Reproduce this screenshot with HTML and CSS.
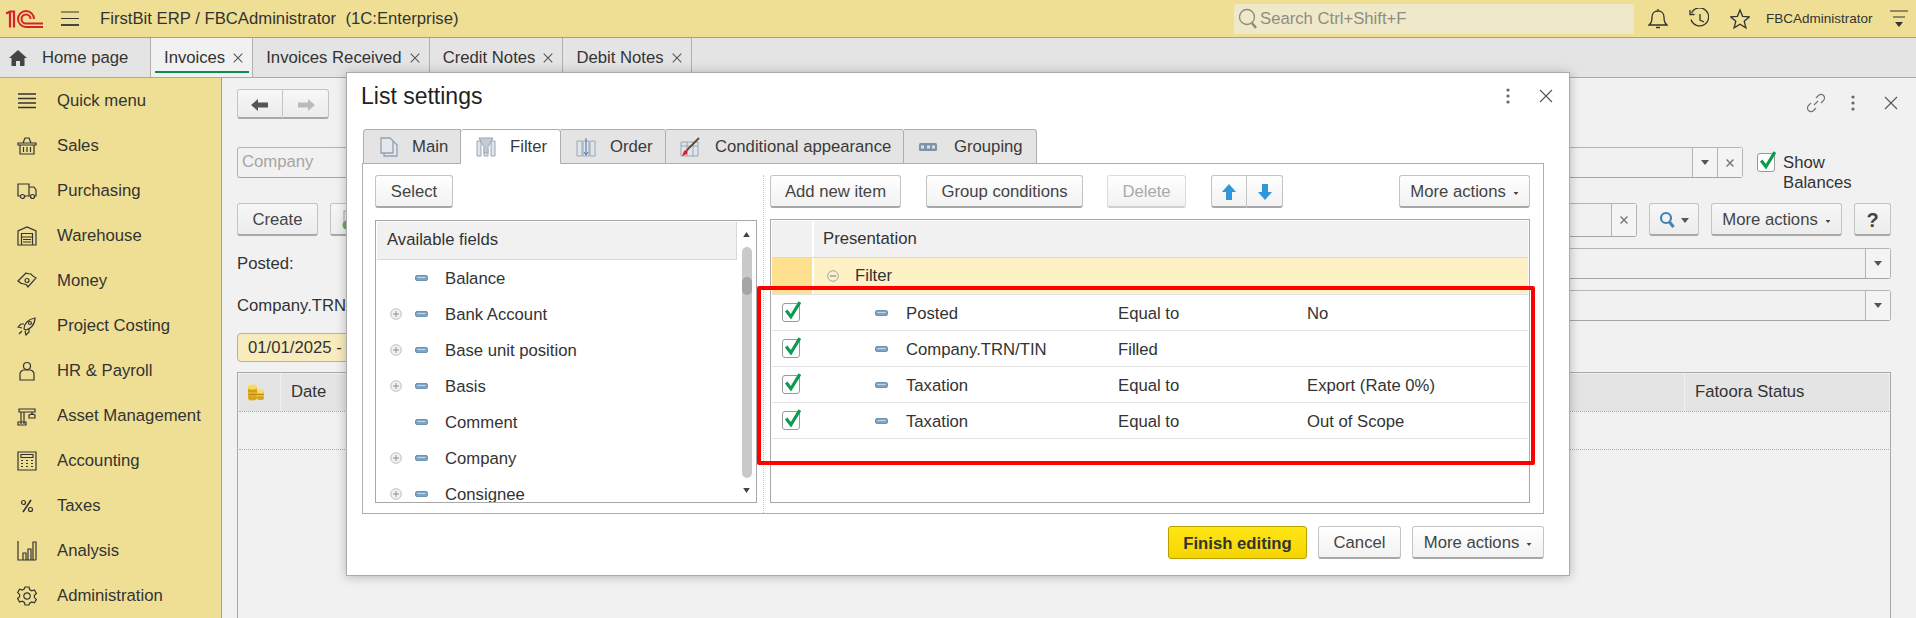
FILE: index.html
```html
<!DOCTYPE html>
<html lang="en">
<head>
    <meta charset="UTF-8">
    <meta name="viewport" content="width=device-width, initial-scale=1.0">
    <title>List settings</title>
    <link rel="stylesheet" href="styles.css">
</head>
<body>
    <svg class="sprites" width="0" height="0">
        <symbol id="i-basket" viewBox="0 0 20 20"><path d="M6 7l2-5h4l2 5M1 7h18v2H1zM3 9v9h14V9M6.500 11v5M10 11v5M13.500 11v5"/></symbol>
        <symbol id="i-truck" viewBox="0 0 20 20"><path d="M4 15H1V3h11v12H7M12 6h5l2 3v6h-2M12 15h2"/><circle cx="5.500" cy="15.500" r="2"/><circle cx="15.500" cy="15.500" r="2"/></symbol>
        <symbol id="i-store" viewBox="0 0 20 20"><path d="M1 19V5l9-4 9 4v14zM4.500 19V7.500h11V19M4.500 11h11M6 13.500h8M6 16h8"/></symbol>
        <symbol id="i-money" viewBox="0 0 20 20"><path d="M1 10l8-8c2 1 4 1 5 1 1 2 3 3 5 4l-8 9c-1-2-3-3-4-3-2 0-4-1-6-3z"/><circle cx="10" cy="9.500" r="2"/></symbol>
        <symbol id="i-rocket" viewBox="0 0 20 20"><path d="M7 13c0-5 4-10 11-11 0 7-5 11-9 12zM7 8H4l-3 3 4 1M12 13v3l-3 3-1-4M5 15l-3 3"/><circle cx="13" cy="7" r="1.500"/></symbol>
        <symbol id="i-person" viewBox="0 0 20 20"><circle cx="10" cy="5" r="3.500"/><path d="M3 19v-6c0-2 2-4 4-4h6c2 0 4 2 4 4v6z"/></symbol>
        <symbol id="i-crane" viewBox="0 0 20 20"><path d="M2 3h16v3H2zM4 6v12M7 6v12M1 16h8v3H1zM15 6v3M12 9l3-1 3 1v3h-6z"/></symbol>
        <symbol id="i-calc" viewBox="0 0 20 20"><path d="M1 1h18v18H1zM4 3.500h12v3H4zM4 9.500h2M9 9.500h2M14 9.500h2M4 12.500h2M9 12.500h2M14 12.500h2M4 15.500h2M9 15.500h2M14 15.500h2"/></symbol>
        <symbol id="i-percent" viewBox="0 0 20 20"><circle cx="6.500" cy="6.500" r="2"/><circle cx="13.500" cy="13.500" r="2"/><path d="M14 4L6 16" stroke-width="1.600"/></symbol>
        <symbol id="i-chart" viewBox="0 0 20 20"><path d="M1 0v19h18M6 19v-7h3v7M11 19V8h3v11M16 19V1h3v18"/></symbol>
        <symbol id="i-gear" viewBox="0 0 20 20"><path d="M8 1h4l.6 2.600 2.200 1.200 2.600-.8 2 3.400-2 1.800v2.400l2 1.800-2 3.400-2.600-.8-2.200 1.200L12 19H8l-.6-2.600-2.200-1.200-2.600.8-2-3.400 2-1.800V8.400l-2-1.800 2-3.400 2.600.8 2.200-1.200z"/><circle cx="10" cy="10" r="3.200"/></symbol>
        <symbol id="i-field" viewBox="0 0 13 6"><rect x=".5" y=".5" width="12" height="5" rx="1.500" fill="#7fa5c6" stroke="#6f93b3"/><path d="M2.500 2.500h8" stroke="#c5d8e8"/></symbol>
        <symbol id="i-plus" viewBox="0 0 12 12"><circle cx="6" cy="6" r="5.300" fill="#f2f2f2" stroke="#bdbdbd"/><path d="M3 6h6M6 3v6" stroke="#8f8f8f"/></symbol>
        <symbol id="i-minus" viewBox="0 0 12 12"><circle cx="6" cy="6" r="5.300" fill="#f7f0d2" stroke="#a9a69a"/><path d="M3 6h6" stroke="#777"/></symbol>
        <symbol id="i-check" viewBox="0 0 20 20"><path d="M4 10l4.500 6L17 2" fill="none" stroke="#0b9a4f" stroke-width="3"/></symbol>
        <symbol id="i-down" viewBox="0 0 8 5"><path d="M0 0h8L4 5z"/></symbol>
        <symbol id="i-x" viewBox="0 0 14 14"><path d="M1 1l12 12M13 1L1 13" fill="none"/></symbol>
        <symbol id="i-dots" viewBox="0 0 4 16"><circle cx="2" cy="2" r="1.600"/><circle cx="2" cy="8" r="1.600"/><circle cx="2" cy="14" r="1.600"/></symbol>
        <symbol id="i-search" viewBox="0 0 16 18"><circle cx="7" cy="7" r="5" fill="none" stroke="#3f84b5" stroke-width="2.200"/><path d="M10.500 11l4 5" stroke="#3f84b5" stroke-width="3"/></symbol>
    </svg>

    <header class="topbar">
        <svg class="logo" viewBox="0 0 38 18" fill="none" stroke="#d5232b" stroke-width="2">
            <path d="M0 3.500L4 1.500H8V17.500M4 1.500V17.500" stroke-width="2.200"/>
            <path d="M28 9A8 8 0 1 0 20 17H37"/>
            <path d="M24.500 9A4.500 4.500 0 1 0 20 13.500H37"/>
        </svg>
        <svg class="burger" viewBox="0 0 18 15" stroke="#333"><path d="M0 1h18M0 7.500h18" stroke-width="1.200"/><path d="M0 14h18" stroke-width="1.800"/></svg>
        <span class="app-title">FirstBit ERP / FBCAdministrator&nbsp; (1C:Enterprise)</span>
        <div class="search-box">
            <svg class="search-ico" viewBox="0 0 20 22" fill="none" stroke="#8a8a80"><circle cx="9" cy="9" r="7.500" stroke-width="1.300"/><path d="M14 15l4 5" stroke-width="2.500"/></svg>
            <span>Search Ctrl+Shift+F</span>
        </div>
        <svg class="top-ico" viewBox="0 0 20 22" fill="none" stroke="#333" stroke-width="1.300"><path d="M1 17c2-2 3-3 3-8 0-4 3-6 6-6s6 2 6 6c0 5 1 6 3 8zM10 1v2M8 19.500h4"/></svg>
        <svg class="top-ico" viewBox="0 0 20 22" fill="none" stroke="#333" stroke-width="1.300"><path d="M2.500 5A9 9 0 1 1 2 11.500M1 2v4.500h4.500M11 6v6l4 2"/></svg>
        <svg class="top-ico" viewBox="0 0 20 22" fill="none" stroke="#333" stroke-width="1.300"><path d="M10 2l2.600 6.300 6.800.5-5.200 4.400 1.700 6.600L10 16.200l-5.900 3.600 1.700-6.600L.6 8.800l6.800-.5z"/></svg>
        <span class="user-name">FBCAdministrator</span>
        <svg class="user-menu" viewBox="0 0 18 18" stroke="#333"><path d="M0 1h18M3 7h12"/><path d="M5 12h8l-4 5z" fill="#333" stroke="none"/></svg>
    </header>

    <nav class="tabs">
        <div class="tab tab-home">
            <svg class="home-ico" viewBox="0 0 18 16"><path d="M9 0l9 8h-2.500v8H11v-5H7v5H2.500V8H0z" fill="#444"/></svg>
            Home page
        </div>
        <div class="tab tab-active">Invoices <svg class="tab-x"><use href="#i-x"/></svg></div>
        <div class="tab">Invoices Received <svg class="tab-x"><use href="#i-x"/></svg></div>
        <div class="tab">Credit Notes <svg class="tab-x"><use href="#i-x"/></svg></div>
        <div class="tab">Debit Notes <svg class="tab-x"><use href="#i-x"/></svg></div>
    </nav>

    <div class="workspace">
        <aside class="side">
            <div class="side-item"><svg class="side-ico" viewBox="0 0 20 20"><path d="M1 3h18M1 7.500h18M1 12h18M1 16.500h18" stroke-width="1.600"/></svg>Quick menu</div>
            <div class="side-item"><svg class="side-ico"><use href="#i-basket"/></svg>Sales</div>
            <div class="side-item"><svg class="side-ico"><use href="#i-truck"/></svg>Purchasing</div>
            <div class="side-item"><svg class="side-ico"><use href="#i-store"/></svg>Warehouse</div>
            <div class="side-item"><svg class="side-ico"><use href="#i-money"/></svg>Money</div>
            <div class="side-item"><svg class="side-ico"><use href="#i-rocket"/></svg>Project Costing</div>
            <div class="side-item"><svg class="side-ico"><use href="#i-person"/></svg>HR &amp; Payroll</div>
            <div class="side-item"><svg class="side-ico"><use href="#i-crane"/></svg>Asset Management</div>
            <div class="side-item"><svg class="side-ico"><use href="#i-calc"/></svg>Accounting</div>
            <div class="side-item"><svg class="side-ico"><use href="#i-percent"/></svg>Taxes</div>
            <div class="side-item"><svg class="side-ico"><use href="#i-chart"/></svg>Analysis</div>
            <div class="side-item"><svg class="side-ico"><use href="#i-gear"/></svg>Administration</div>
        </aside>

        <main class="main">
            <div class="row-nav">
                <div class="btn-group">
                    <button class="btn btn-arrow"><svg viewBox="0 0 18 12" width="18" height="12"><path d="M0 6l7-6v3.500h10v5H7V12z" fill="#555"/></svg></button>
                    <button class="btn btn-arrow"><svg viewBox="0 0 18 12" width="18" height="12"><path d="M18 6l-7-6v3.500H1v5h10V12z" fill="#bbb"/></svg></button>
                </div>
                <div class="form-actions">
                    <svg class="link-ico" viewBox="0 0 20 20" fill="none" stroke="#777" stroke-width="1.200"><path d="M8 12l4-4M10 5l2.500-2.500a3.500 3.500 0 0 1 5 5L15 10M10 15l-2.500 2.500a3.500 3.500 0 0 1-5-5L5 10"/></svg>
                    <svg class="dots-ico"><use href="#i-dots"/></svg>
                    <svg class="close-ico"><use href="#i-x"/></svg>
                </div>
            </div>

            <div class="row-company">
                <div class="field field-grow">
                    <span class="placeholder">Company</span>
                    <span class="field-btn"><svg class="caret"><use href="#i-down"/></svg></span>
                    <span class="field-btn"><svg class="mini-x"><use href="#i-x"/></svg></span>
                </div>
                <div class="balance-check">
                    <span class="check-box"><svg><use href="#i-check"/></svg></span>
                    <span>Show<br>Balances</span>
                </div>
            </div>

            <div class="row-commands">
                <button class="btn btn-create">Create</button>
                <button class="btn btn-post"><svg viewBox="0 0 16 20" width="16" height="20"><rect x="2" y="1" width="11" height="15" fill="#eee" stroke="#aaa"/><circle cx="5" cy="15" r="4.500" fill="#63b34f"/></svg></button>
                <div class="field field-grow field-tall">
                    <span class="field-btn"><svg class="mini-x"><use href="#i-x"/></svg></span>
                </div>
                <button class="btn btn-find"><svg viewBox="0 0 16 18" width="16" height="18"><use href="#i-search"/></svg><svg class="caret"><use href="#i-down"/></svg></button>
                <button class="btn btn-more">More actions<svg class="caret-sm"><use href="#i-down"/></svg></button>
                <button class="btn btn-help">?</button>
            </div>

            <div class="row-filter">
                <label class="filter-label">Posted:</label>
                <div class="field field-grow"><span class="field-btn"><svg class="caret"><use href="#i-down"/></svg></span></div>
            </div>
            <div class="row-filter">
                <label class="filter-label">Company.TRN/TIN:</label>
                <div class="field field-grow"><span class="field-btn"><svg class="caret"><use href="#i-down"/></svg></span></div>
            </div>

            <div class="date-chip">01/01/2025 - 31/12/2025</div>

            <div class="doc-table">
                <div class="doc-head">
                    <div class="doc-th doc-coin">
                        <svg viewBox="0 0 18 18" width="18" height="18">
                            <path d="M1 4h9v11H1z" fill="#e4b22a"/><ellipse cx="5.500" cy="4" rx="4.500" ry="2.500" fill="#f7da5c"/><ellipse cx="5.500" cy="15" rx="4.500" ry="2.500" fill="#d9a51d"/>
                            <path d="M1 8h9M1 11.500h9" stroke="#b98a14"/>
                            <path d="M10 8h7v7h-7z" fill="#eec23a"/><ellipse cx="13.500" cy="8" rx="3.500" ry="2" fill="#f9e06a"/><ellipse cx="13.500" cy="15" rx="3.500" ry="2" fill="#d9a51d"/>
                            <path d="M10 11.500h7" stroke="#b98a14"/>
                        </svg>
                    </div>
                    <div class="doc-th doc-date">Date</div>
                    <div class="doc-th doc-status">Fatoora Status</div>
                </div>
                <div class="doc-empty"></div>
            </div>
        </main>
    </div>

    <section class="modal">
        <div class="modal-head">
            <h1>List settings</h1>
            <svg class="dots-ico"><use href="#i-dots"/></svg>
            <svg class="close-ico"><use href="#i-x"/></svg>
        </div>

        <div class="sheet-tabs">
            <div class="sheet-tab tab-main">
                <svg class="sheet-ico" viewBox="0 0 20 20" fill="#e4e8ee" stroke="#93a0ad" stroke-width="1.300"><path d="M5 4h9l4 4v11H5z"/><path d="M2 1h9l3 3v12H2z"/></svg>Main
            </div>
            <div class="sheet-tab sheet-tab-on tab-filter">
                <svg class="sheet-ico" viewBox="0 0 20 20" fill="#dfe5ea" stroke="#9aa7b2"><path d="M1 4h4v15H1zM15 4h4v15h-4zM8 12h4v7H8z"/><path d="M3 1h14l-5 9v6H8v-6z" fill="#c3ccd4"/></svg>Filter
            </div>
            <div class="sheet-tab tab-order">
                <svg class="sheet-ico" viewBox="0 0 20 20" fill="#dfe5ea" stroke="#9aa7b2"><path d="M1 4h5v15H1zM14 4h5v15h-5zM7 4h6v15H7z"/><path d="M10 1v17M8 15l2 3 2-3" fill="none" stroke="#3f74a8"/></svg>Order
            </div>
            <div class="sheet-tab tab-cond">
                <svg class="sheet-ico" viewBox="0 0 20 20" fill="#dfe5ea" stroke="#9aa7b2"><path d="M1 5h17v14H1zM1 9h17M7 5v14M13 5v14"/><path d="M19 1L7 13" stroke="#6b4a32" stroke-width="2"/><path d="M8 12l-4 2-2 5 5-2z" fill="#d5232b" stroke="none"/></svg>Conditional appearance
            </div>
            <div class="sheet-tab tab-group">
                <svg class="sheet-ico sheet-ico-flat" viewBox="0 0 18 8"><rect width="18" height="8" rx="1.500" fill="#7f93a8"/><path d="M2 2.500h3v3H2zM8 2.500h3v3H8zM13 2.500h3v3h-3z" fill="#d8e0e8"/></svg>Grouping
            </div>
        </div>

        <div class="sheet">
            <div class="fields-pane">
                <button class="btn btn-tool btn-select">Select</button>
                <div class="fields-list">
                    <div class="fields-col">
                        <div class="fields-head">Available fields</div>
                        <div class="fields-rows">
                            <div class="field-row"><svg class="fi"><use href="#i-field"/></svg>Balance</div>
                            <div class="field-row"><svg class="pl"><use href="#i-plus"/></svg><svg class="fi"><use href="#i-field"/></svg>Bank Account</div>
                            <div class="field-row"><svg class="pl"><use href="#i-plus"/></svg><svg class="fi"><use href="#i-field"/></svg>Base unit position</div>
                            <div class="field-row"><svg class="pl"><use href="#i-plus"/></svg><svg class="fi"><use href="#i-field"/></svg>Basis</div>
                            <div class="field-row"><svg class="fi"><use href="#i-field"/></svg>Comment</div>
                            <div class="field-row"><svg class="pl"><use href="#i-plus"/></svg><svg class="fi"><use href="#i-field"/></svg>Company</div>
                            <div class="field-row"><svg class="pl"><use href="#i-plus"/></svg><svg class="fi"><use href="#i-field"/></svg>Consignee</div>
                        </div>
                    </div>
                    <div class="scroll">
                        <svg class="scroll-arrow" viewBox="0 0 8 6"><path d="M4 0l4 6H0z"/></svg>
                        <div class="scroll-track"><div class="scroll-thumb"></div></div>
                        <svg class="scroll-arrow" viewBox="0 0 8 6"><path d="M0 0h8L4 6z"/></svg>
                    </div>
                </div>
            </div>

            <div class="filter-pane">
                <div class="filter-tools">
                    <button class="btn btn-tool btn-add">Add new item</button>
                    <button class="btn btn-tool btn-cond">Group conditions</button>
                    <button class="btn btn-tool btn-off">Delete</button>
                    <div class="btn-group">
                        <button class="btn btn-tool btn-move"><svg viewBox="0 0 14 16" width="14" height="16"><path d="M7 0l7 8H10v8H4V8H0z" fill="#2f97da"/></svg></button>
                        <button class="btn btn-tool btn-move"><svg viewBox="0 0 14 16" width="14" height="16"><path d="M7 16l7-8H10V0H4v8H0z" fill="#2f97da"/></svg></button>
                    </div>
                    <button class="btn btn-tool btn-tool-more">More actions<svg class="caret-sm"><use href="#i-down"/></svg></button>
                </div>
                <div class="filter-table">
                    <div class="ft-head"><div class="ft-check"></div><div class="ft-title">Presentation</div></div>
                    <div class="ft-group">
                        <div class="ft-check"></div>
                        <div class="ft-group-name"><svg class="pl"><use href="#i-minus"/></svg>Filter</div>
                    </div>
                    <div class="ft-row">
                        <span class="check-box"><svg><use href="#i-check"/></svg></span>
                        <svg class="fi"><use href="#i-field"/></svg><span>Posted</span><span>Equal to</span><span>No</span>
                    </div>
                    <div class="ft-row">
                        <span class="check-box"><svg><use href="#i-check"/></svg></span>
                        <svg class="fi"><use href="#i-field"/></svg><span>Company.TRN/TIN</span><span>Filled</span><span></span>
                    </div>
                    <div class="ft-row">
                        <span class="check-box"><svg><use href="#i-check"/></svg></span>
                        <svg class="fi"><use href="#i-field"/></svg><span>Taxation</span><span>Equal to</span><span>Export (Rate 0%)</span>
                    </div>
                    <div class="ft-row">
                        <span class="check-box"><svg><use href="#i-check"/></svg></span>
                        <svg class="fi"><use href="#i-field"/></svg><span>Taxation</span><span>Equal to</span><span>Out of Scope</span>
                    </div>
                </div>
            </div>
        </div>

        <div class="modal-foot">
            <button class="btn btn-finish">Finish editing</button>
            <button class="btn btn-tool btn-cancel">Cancel</button>
            <button class="btn btn-tool btn-foot-more">More actions<svg class="caret-sm"><use href="#i-down"/></svg></button>
        </div>

        <div class="red-mark"></div>
    </section>
</body>
</html>
```

FILE: styles.css
```css
* {
    box-sizing: border-box;
}
html, body {
    height: 100%;
}
body {
    margin: 0;
    overflow: hidden;
    position: relative;
    font-family: "Liberation Sans", Arial, sans-serif;
    font-size: 16.7px;
    color: #333;
    background-color: #f1f1f1;
}
.sprites {
    position: absolute;
}
svg {
    display: block;
    flex: none;
}

/* top bar */
.topbar {
    height: 38px;
    display: flex;
    align-items: center;
    background-color: #efdf95;
    border-bottom: 1px solid #a8a083;
    padding-left: 6px;
}
.logo {
    width: 38px;
    height: 18px;
}
.burger {
    width: 18px;
    height: 15px;
    margin-left: 17px;
}
.app-title {
    margin-left: 21px;
    width: 1134px;
}
.search-box {
    width: 400px;
    height: 30px;
    display: flex;
    align-items: center;
    gap: 2px;
    padding-left: 4px;
    border-radius: 3px;
    background-color: #efe9c9;
    color: #8d8d84;
}
.search-ico {
    width: 20px;
    height: 22px;
}
.top-ico {
    width: 20px;
    height: 22px;
    margin-left: 21px;
}
.search-box + .top-ico {
    margin-left: 14px;
}
.user-name {
    margin-left: 16px;
    font-size: 13.500px;
}
.user-menu {
    width: 18px;
    height: 18px;
    margin-left: 17px;
}

/* page tabs */
.tabs {
    height: 40px;
    display: flex;
    background-color: #e4e4e4;
    border-bottom: 1px solid #a9a9a9;
}
.tab {
    display: flex;
    align-items: center;
    gap: 8px;
    padding: 0 9px 0 13px;
    border-right: 1px solid #b0b0b0;
}
.tab-home {
    width: 151px;
    padding-left: 9px;
    gap: 15px;
}
.tab-active {
    background-color: #f1f1f1;
    position: relative;
}
.tab-active::after {
    content: "";
    position: absolute;
    left: 4px;
    right: 3px;
    bottom: 4px;
    height: 2px;
    background-color: #0b8f50;
}
.home-ico {
    width: 18px;
    height: 16px;
}
.tab-x {
    width: 10px;
    height: 10px;
    margin-top: 1px;
    stroke: #555;
    stroke-width: 1.500;
}

/* side menu */
.workspace {
    height: 540px;
    display: flex;
}
.side {
    width: 222px;
    flex: none;
    background-color: #efdf95;
    border-right: 1px solid #a8a083;
}
.side-item {
    height: 45px;
    display: flex;
    align-items: center;
    gap: 20px;
    padding-left: 17px;
}
.side-ico {
    width: 20px;
    height: 20px;
    fill: none;
    stroke: #333;
    stroke-width: 1.200;
}

/* form behind the dialog */
.main {
    flex: 1;
    min-width: 0;
    padding: 11px 25px 0 15px;
    display: flex;
    flex-direction: column;
}
.row-nav {
    height: 30px;
    display: flex;
    justify-content: space-between;
    align-items: center;
}
.form-actions {
    display: flex;
    align-items: center;
    margin: -2px -7px 0 0;
}
.form-actions .link-ico {
    margin-right: 25px;
}
.form-actions .dots-ico {
    margin-right: 29px;
}
.link-ico {
    width: 20px;
    height: 20px;
}
.dots-ico {
    width: 4px;
    height: 16px;
    fill: #666;
}
.close-ico {
    width: 14px;
    height: 14px;
    stroke: #555;
    stroke-width: 1.100;
}
.row-company {
    margin-top: 28px;
    display: flex;
    gap: 14px;
}
.field {
    height: 31px;
    display: flex;
    align-items: stretch;
    border: 1px solid #b4b4b4;
    border-bottom-color: #a5a5a5;
    border-radius: 3px;
}
.field-grow {
    flex: 1;
    min-width: 0;
    justify-content: flex-end;
}
.placeholder {
    margin-right: auto;
    padding-left: 4px;
    line-height: 28px;
    color: #a5a5a5;
}
.field-btn {
    width: 25px;
    display: flex;
    align-items: center;
    justify-content: center;
    border-left: 1px solid #b4b4b4;
    background-color: #f4f4f4;
}
.caret {
    width: 8px;
    height: 5px;
    fill: #555;
}
.caret-sm {
    width: 6px;
    height: 3px;
    margin: 3px 0 0 7px;
    fill: #444;
}
.mini-x {
    width: 8px;
    height: 8px;
    stroke: #777;
    stroke-width: 2.500;
}
.balance-check {
    width: 134px;
    display: flex;
    gap: 8px;
    margin-top: 6px;
    line-height: 20px;
    margin-bottom: -15px;
}
.check-box {
    width: 18px;
    height: 19px;
    display: block;
    flex: none;
    position: relative;
    background-color: #fff;
    border: 1px solid #999;
    border-radius: 3px;
}
.check-box svg {
    position: absolute;
    left: -1px;
    top: -4px;
    width: 21px;
    height: 21px;
}
.row-commands {
    margin-top: 25px;
    display: flex;
    gap: 12px;
}
.btn {
    height: 33px;
    padding: 2px 0 0;
    font-family: inherit;
    font-size: 16.7px;
    color: #444;
    display: flex;
    align-items: center;
    justify-content: center;
    background: linear-gradient(#f7f7f7, #ececec);
    border: 1px solid #c4c4c4;
    border-bottom: 2px solid #a8a8a8;
    border-radius: 3px;
}
.btn-group {
    display: flex;
}
.btn-group .btn:first-child {
    border-top-right-radius: 0;
    border-bottom-right-radius: 0;
}
.btn-group .btn:last-child {
    border-top-left-radius: 0;
    border-bottom-left-radius: 0;
    border-left: none;
}
.btn-arrow {
    width: 46px;
    height: 30px;
}
.btn-create {
    width: 81px;
}
.btn-post {
    width: 40px;
}
.field-tall {
    height: 34px;
}
.btn-find {
    width: 50px;
    gap: 6px;
}
.btn-more {
    width: 131px;
}
.btn-help {
    width: 37px;
    font-size: 20px;
    font-weight: bold;
}
.row-filter {
    margin-top: 11px;
    display: flex;
    align-items: center;
    gap: 40px;
}
.filter-label {
    width: 150px;
    flex: none;
}
.date-chip {
    margin-top: 12px;
    height: 29px;
    width: 300px;
    padding-left: 10px;
    line-height: 27px;
    background-color: #f8ebbd;
    border: 1px solid #bdb28a;
    border-radius: 4px;
}
.doc-table {
    flex: 1;
    margin-top: 10px;
    border: 1px solid #a8a8a8;
    border-bottom: none;
    padding: 1px 1px 0;
}
.doc-head {
    display: grid;
    grid-template-columns: 41px 1fr 204px;
    height: 37px;
    gap: 1px;
}
.doc-th {
    display: flex;
    align-items: center;
    background-color: #e4e4e4;
    padding: 0 0 2px 10px;
}
.doc-coin {
    padding-left: 8px;
}
.doc-empty {
    height: 39px;
    border-top: 1px dotted #aaa;
    border-bottom: 1px dotted #aaa;
}

/* dialog */
.modal {
    position: absolute;
    left: 346px;
    top: 72px;
    width: 1224px;
    height: 504px;
    padding: 0 25px 0 15px;
    background-color: #fff;
    border: 1px solid #ababab;
    box-shadow: 0 1px 10px rgba(0, 0, 0, 0.25);
}
.modal-head {
    height: 56px;
    display: flex;
    align-items: center;
    padding-bottom: 10px;
    margin-right: -9px;
}
.modal-head h1 {
    margin: 0 auto 0 -1px;
    font-size: 23px;
    font-weight: normal;
    color: #222;
}
.modal-head .dots-ico {
    margin-right: 29px;
}
.sheet-tabs {
    display: flex;
    height: 35px;
    position: relative;
    z-index: 1;
    padding-left: 1px;
}
.sheet-tab {
    height: 35px;
    display: flex;
    align-items: center;
    padding-left: 15px;
    gap: 14px;
    background-color: #e4e4e4;
    border: 1px solid #aeaeae;
    border-left: none;
    border-radius: 0 3px 0 0;
    color: #3a3a3a;
}
.tab-main {
    width: 98px;
    gap: 13px;
    border-left: 1px solid #aeaeae;
    border-radius: 3px 0 0 0;
}
.tab-filter {
    width: 100px;
}
.tab-order {
    width: 105px;
}
.tab-cond {
    width: 238px;
    gap: 15px;
    padding-left: 14px;
}
.tab-group {
    width: 133px;
    gap: 17px;
}
.sheet-tab-on {
    background-color: #fff;
    border-top-left-radius: 3px;
    border-bottom-color: #fff;
}
.sheet-ico {
    width: 20px;
    height: 20px;
}
.sheet-ico-flat {
    width: 18px;
    height: 8px;
}
.sheet {
    height: 351px;
    margin-top: -1px;
    border: 1px solid #aeaeae;
    padding: 11px 13px 0 12px;
    display: flex;
}
.fields-pane {
    width: 382px;
    flex: none;
    display: flex;
    flex-direction: column;
    gap: 12px;
}
.btn-tool {
    background: linear-gradient(#fff, #f2f2f2);
}
.btn-select {
    width: 78px;
}
.fields-list {
    height: 283px;
    display: flex;
    border: 1px solid #a8a8a8;
    overflow: hidden;
}
.fields-col {
    flex: 1;
    min-width: 0;
    padding: 1px 0 0 1px;
}
.fields-head {
    height: 38px;
    line-height: 36px;
    padding-left: 10px;
    background-color: #f1f1f1;
    border-bottom: 1px solid #d8d8d8;
    border-right: 1px solid #d8d8d8;
}
.field-row {
    height: 36px;
    position: relative;
    display: flex;
    align-items: center;
    padding: 2px 0 0 38px;
    gap: 17px;
}
.field-row .pl {
    position: absolute;
    left: 13px;
    top: 12px;
}
.fi {
    width: 13px;
    height: 6px;
    margin-top: -2px;
}
.pl {
    width: 12px;
    height: 12px;
}
.scroll {
    width: 19px;
    flex: none;
    display: flex;
    flex-direction: column;
    align-items: center;
    padding: 11px 0 9px;
    gap: 6px;
}
.scroll-arrow {
    width: 7px;
    height: 5px;
    fill: #444;
}
.scroll-track {
    flex: 1;
    width: 10px;
    margin-top: 4px;
    margin-bottom: 4px;
    background-color: #c9c9c9;
    border-radius: 5px;
    padding-top: 30px;
}
.scroll-thumb {
    height: 18px;
    background-color: #a5a5a5;
    border-radius: 5px;
}
.filter-pane {
    flex: 1;
    min-width: 0;
    margin-left: 6px;
    padding-left: 6px;
    border-left: 1px dotted #c4c4c4;
    display: flex;
    flex-direction: column;
    gap: 11px;
}
.filter-tools {
    display: flex;
    gap: 25px;
}
.btn-add {
    width: 131px;
}
.btn-cond {
    width: 157px;
}
.btn-off {
    color: #aaa;
    width: 79px;
    margin-left: -1px;
    border-color: #dcdcdc;
    border-bottom-color: #cfcfcf;
}
.btn-move {
    width: 36px;
}
.btn-tool-more {
    margin-left: auto;
    width: 131px;
}
.filter-table {
    height: 284px;
    border: 1px solid #a8a8a8;
    padding: 1px;
}
.ft-head,
.ft-group {
    display: grid;
    grid-template-columns: 40px 1fr;
    gap: 2px;
}
.ft-head {
    height: 37px;
    background-color: #fff;
    border-bottom: 1px solid #d8d8d8;
}
.ft-head > div {
    background-color: #f1f1f1;
}
.ft-title {
    line-height: 36px;
    padding-left: 9px;
}
.ft-group {
    height: 36px;
}
.ft-group .ft-check {
    background-color: #fee08f;
}
.ft-group-name {
    background-color: #fdf1c5;
    display: flex;
    align-items: center;
    gap: 16px;
    padding: 0 0 0 13px;
}
.ft-row {
    height: 36px;
    display: grid;
    grid-template-columns: 93px 31px 212px 189px 1fr;
    align-items: center;
    border-top: 1px solid #e2e2e2;
    padding: 2px 0 0 10px;
}
.ft-row .check-box {
    margin-top: -2px;
}
.ft-row:last-child {
    border-bottom: 1px solid #e2e2e2;
    height: 37px;
}
.modal-foot {
    margin-top: 12px;
    display: flex;
    justify-content: flex-end;
    gap: 11px;
}
.btn-finish {
    width: 139px;
    font-weight: bold;
    color: #333;
    background: linear-gradient(#ffe616, #f5d500);
    border: 1px solid #b9a000;
}
.btn-cancel {
    width: 83px;
}
.btn-foot-more {
    width: 132px;
}
.red-mark {
    position: absolute;
    left: 410px;
    top: 213px;
    width: 778px;
    height: 179px;
    border: 4px solid #f00;
    border-radius: 2px;
}
```
